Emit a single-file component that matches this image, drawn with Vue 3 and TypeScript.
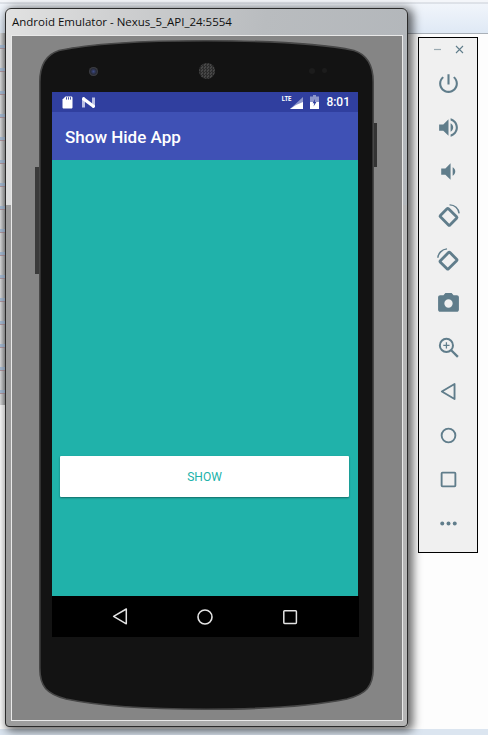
<script setup lang="ts">
// Material icon paths for the emulator's side toolbar
const toolIcons = [
  {
    name: 'power',
    d: 'M13 3h-2v10h2V3zm4.83 2.17l-1.42 1.42C17.99 7.86 19 9.81 19 12c0 3.87-3.13 7-7 7s-7-3.13-7-7c0-2.19 1.01-4.14 2.58-5.42L6.17 5.17C4.23 6.82 3 9.26 3 12c0 4.97 4.03 9 9 9s9-4.03 9-9c0-2.74-1.23-5.18-3.17-6.83z',
  },
  {
    name: 'volume-up',
    d: 'M3 9v6h4l5 5V4L7 9H3zm13.5 3c0-1.77-1.02-3.29-2.5-4.03v8.05c1.48-.73 2.5-2.25 2.5-4.02zM14 3.23v2.06c2.89.86 5 3.54 5 6.71s-2.11 5.85-5 6.71v2.06c4.01-.91 7-4.49 7-8.77s-2.99-7.86-7-8.77z',
  },
  {
    name: 'volume-down',
    d: 'M18.5 12c0-1.77-1.02-3.29-2.5-4.03v8.05c1.48-.73 2.5-2.25 2.5-4.02zM5 9v6h4l5 5V4L9 9H5z',
  },
]
</script>

<template>
  <div class="desktop">
    <div class="top-band" />
    <div class="left-strip" />
    <div class="bottom-band" />

    <div class="window">
      <div class="titlebar">Android Emulator - Nexus_5_API_24:5554</div>
      <div class="client">
        <div class="phone">
          <svg class="phone-body" width="343" height="670" viewBox="-4 0 343 670">
            <rect x="-4" y="127" width="4" height="107" fill="#3a3a3a" />
            <rect x="335" y="83" width="3" height="44" fill="#333" />
            <path
              d="M0.8 42C0.8 26 6 15 20 10.5C60 2 120 0.8 167 0.8C215 0.8 275 2 315 10.5C329 15 334.2 26 334.2 42V628C334.2 647 327 654 308 659C270 667 215 669.2 167 669.2C120 669.2 65 667 27 659C8 654 0.8 647 0.8 628Z"
              fill="#131313"
              stroke="#474747"
              stroke-width="1.6"
            />
          </svg>
          <span class="camera" />
          <span class="speaker" />
          <span class="sensor sensor-a" />
          <span class="sensor sensor-b" />

          <div class="screen">
            <div class="statusbar">
              <svg class="status-sd" width="11" height="13" viewBox="0 0 11 13">
                <path d="M3.5 0.5H9.2C10 0.5 10.5 1 10.5 1.8V11.2C10.5 12 10 12.5 9.2 12.5H1.8C1 12.5 0.5 12 0.5 11.2V3.5Z" fill="#fff" />
                <path d="M4.5 1.2V3.6M6.5 1.2V3.6M8.5 1.2V3.6" stroke="#303f9f" stroke-width="0.9" />
              </svg>
              <svg class="status-n" width="13" height="11" viewBox="0 0 13 11">
                <path d="M1.5 0.5V10.5" stroke="#b9bfe3" stroke-width="3" />
                <path d="M11.5 0.5V10.5" stroke="#b9bfe3" stroke-width="3" />
                <path d="M0.5 1L12.5 10" stroke="#fff" stroke-width="3.2" />
              </svg>
              <span class="status-lte">LTE</span>
              <svg class="status-signal" width="14" height="12" viewBox="0 0 14 12">
                <path d="M13 0V12H0Z" fill="#8d96ca" />
                <path d="M13 5V12H6L0 12L6 8Z" fill="#fff" />
              </svg>
              <svg class="status-battery" width="9" height="14" viewBox="0 0 9 14">
                <path d="M3 0H6V1.5H9V14H0V1.5H3Z" fill="#8d96ca" />
                <path d="M0 7H9V14H0Z" fill="#fff" />
                <path d="M5 4L2.6 8.3H4.2L3.6 11.5L6.4 7H4.8Z" fill="#303f9f" />
              </svg>
              <span class="status-time">8:01</span>
            </div>
            <div class="appbar">Show Hide App</div>
            <div class="content">
              <button class="show-btn" type="button">SHOW</button>
            </div>
            <div class="navbar">
              <svg width="28" height="28" viewBox="0 0 28 28">
                <path d="M20.3 6V20.8L7.6 13.4Z" fill="none" stroke="#e4e4e4" stroke-width="1.5" stroke-linejoin="round" />
              </svg>
              <svg width="28" height="28" viewBox="0 0 28 28">
                <circle cx="14" cy="14" r="7" fill="none" stroke="#e4e4e4" stroke-width="1.6" />
              </svg>
              <svg width="28" height="28" viewBox="0 0 28 28">
                <rect x="7.8" y="7.8" width="12.6" height="12.6" rx="0.8" fill="none" stroke="#e4e4e4" stroke-width="1.5" />
              </svg>
            </div>
          </div>
        </div>
      </div>
    </div>

    <div class="panel">
      <div class="panel-controls">
        <svg width="9" height="9" viewBox="0 0 9 9"><path d="M1 4.5H8" stroke="#9aa9b1" stroke-width="1.2" /></svg>
        <svg width="9" height="9" viewBox="0 0 9 9"><path d="M1 1L8 8M8 1L1 8" stroke="#607d8b" stroke-width="1.1" /></svg>
      </div>

      <div v-for="icon in toolIcons" :key="icon.name" class="tool">
        <svg width="25" height="25" viewBox="0 0 24 24"><path :d="icon.d" fill="#607d8b" /></svg>
      </div>

      <div class="tool">
        <svg width="25" height="25" viewBox="0 0 24 24" fill="none" stroke="#607d8b">
          <rect x="6.5" y="6.8" width="11" height="13" rx="1" stroke-width="2.7" transform="rotate(-45 12 13.3)" />
          <path d="M13 1.8C17.8 1.6 21.8 5.4 22.2 10" stroke-width="1.4" />
        </svg>
      </div>
      <div class="tool">
        <svg width="25" height="25" viewBox="0 0 24 24" fill="none" stroke="#607d8b">
          <rect x="6.5" y="5.2" width="11" height="13" rx="1" stroke-width="2.7" transform="rotate(45 12 11.7) translate(1 1)" />
          <path d="M1.8 10.4C2 6.2 5.6 2.2 10.6 1.8" stroke-width="1.4" />
        </svg>
      </div>
      <div class="tool">
        <svg width="25" height="25" viewBox="0 0 24 24">
          <path
            fill="#607d8b"
            fill-rule="evenodd"
            d="M9 2L7.17 4H4C2.9 4 2 4.9 2 6V18C2 19.1 2.9 20 4 20H20C21.1 20 22 19.1 22 18V6C22 4.9 21.1 4 20 4H16.83L15 2H9ZM12 8A4 4 0 1 1 12 16A4 4 0 1 1 12 8Z"
          />
        </svg>
      </div>
      <div class="tool">
        <svg width="25" height="25" viewBox="0 0 24 24" fill="none" stroke="#607d8b">
          <circle cx="10" cy="10" r="6.3" stroke-width="1.9" />
          <path d="M14.6 14.6L21 21" stroke-width="2.2" />
          <path d="M10 7V13M7 10H13" stroke-width="1.2" />
        </svg>
      </div>
      <div class="tool">
        <svg width="25" height="25" viewBox="0 0 24 24">
          <path d="M17.8 4.8V19.2L5.6 12Z" fill="none" stroke="#607d8b" stroke-width="1.8" stroke-linejoin="round" />
        </svg>
      </div>
      <div class="tool">
        <svg width="25" height="25" viewBox="0 0 24 24">
          <circle cx="12" cy="12" r="6.6" fill="none" stroke="#607d8b" stroke-width="1.8" />
        </svg>
      </div>
      <div class="tool">
        <svg width="25" height="25" viewBox="0 0 24 24">
          <rect x="5.4" y="5.4" width="13.2" height="13.2" rx="0.8" fill="none" stroke="#607d8b" stroke-width="1.8" />
        </svg>
      </div>
      <div class="tool">
        <svg width="25" height="25" viewBox="0 0 24 24" fill="#607d8b">
          <circle cx="6" cy="12" r="1.9" />
          <circle cx="12" cy="12" r="1.9" />
          <circle cx="18" cy="12" r="1.9" />
        </svg>
      </div>
    </div>
  </div>
</template>

<style scoped>
.desktop {
  position: relative;
  display: flex;
  align-items: flex-start;
  box-sizing: border-box;
  width: 488px;
  height: 735px;
  padding: 8px 0 0 5px;
  overflow: hidden;
  background: #fdfdfd;
}

.top-band {
  position: absolute;
  left: 0;
  right: 0;
  top: 0;
  height: 33px;
  background: linear-gradient(180deg, #f4f6fa 0, #f4f6fa 2px, #c9ced6 3px, #f1f5fb 4px, #dfe9f5 100%);
  border-bottom: 1px solid #a9b0b8;
}

.left-strip {
  position: absolute;
  left: 0;
  top: 33px;
  width: 5px;
  height: 372px;
  background:
    repeating-linear-gradient(180deg, transparent 0, transparent 12px, #a9bed6 12px, #a9bed6 15px, #b59aa0 15px, #b59aa0 16px, transparent 16px, transparent 23px),
    linear-gradient(90deg, #dedfe0, #a8a9aa);
}

.bottom-band {
  position: absolute;
  left: 0;
  right: 0;
  top: 729px;
  height: 6px;
  background: #dbe5f0;
}

.window {
  position: relative;
  flex: none;
  display: flex;
  flex-direction: column;
  box-sizing: border-box;
  width: 403px;
  height: 719px;
  padding: 0 6px 7px 7px;
  border-radius: 6px 6px 4px 4px;
  outline: 1px solid #2a2a2a;
  outline-offset: -1px;
  background:
    linear-gradient(100deg, #e2e2e2 0, #cfd0d1 25%, #b9bcbf 60%, #b2b6ba 100%) top / 100% 197px no-repeat,
    linear-gradient(90deg, #9c9c9c, #aaa 50%, #b5b5b5);
  box-shadow: 3px 2px 10px 2px rgba(0, 0, 0, 0.6);
}

.titlebar {
  flex: none;
  height: 28px;
  padding: 6px 0 0 0;
  box-sizing: border-box;
  font-family: "Open Sans", "Noto Sans", sans-serif;
  font-size: 11.5px;
  line-height: 16px;
  color: #101010;
  white-space: nowrap;
}

.client {
  flex: 1;
  background: #858585;
  box-shadow: 0 0 0 1px #e9e9e9;
}

.phone {
  position: relative;
  width: 335px;
  height: 670px;
  margin: 4px 0 0 27px;
  padding: 52px 0 0 13px;
  box-sizing: border-box;
}

.phone-body {
  position: absolute;
  left: -4px;
  top: 0;
}

.camera {
  position: absolute;
  left: 50px;
  top: 27px;
  width: 9px;
  height: 9px;
  border-radius: 50%;
  background: radial-gradient(circle, #3c4a86 0, #272a38 45%, #4a4a4a 80%);
}

.speaker {
  position: absolute;
  left: 160px;
  top: 23px;
  width: 16px;
  height: 16px;
  border-radius: 50%;
  background: repeating-conic-gradient(#2d2d2d 0 25%, #474747 0 50%) 0 0 / 3px 3px;
}

.sensor {
  position: absolute;
  top: 28px;
  width: 6px;
  height: 6px;
  border-radius: 50%;
  background: #1c1c1c;
}

.sensor-a {
  left: 270px;
}

.sensor-b {
  left: 283px;
  width: 5px;
  height: 5px;
}

.screen {
  position: relative;
  display: flex;
  flex-direction: column;
  width: 306px;
  height: 545px;
}

.statusbar {
  flex: none;
  display: flex;
  align-items: center;
  height: 20px;
  padding: 0 8px 0 10px;
  box-sizing: border-box;
  background: #303f9f;
}

.status-n {
  margin-left: 9px;
}

.status-lte {
  margin-left: auto;
  margin-bottom: 6px;
  font-family: Roboto, sans-serif;
  font-size: 7px;
  font-weight: 700;
  line-height: 8px;
  color: #fff;
  transform: scaleX(0.85);
}

.status-signal {
  margin-left: -2px;
  margin-top: 2px;
}

.status-battery {
  margin-left: 6px;
}

.status-time {
  margin-left: 7px;
  font-family: Roboto, sans-serif;
  font-size: 12px;
  font-weight: 500;
  color: #fff;
}

.appbar {
  flex: none;
  height: 48px;
  padding-left: 13px;
  padding-bottom: 2px;
  box-sizing: border-box;
  background: #3f51b5;
  font-family: Roboto, sans-serif;
  font-size: 17px;
  font-weight: 500;
  line-height: 50px;
  color: #fff;
}

.content {
  flex: 1;
  padding: 296px 9px 0 8px;
  background: #20b2aa;
}

.show-btn {
  display: block;
  width: 100%;
  height: 41px;
  padding: 0;
  border: 0;
  border-radius: 1px;
  background: #fff;
  box-shadow: 0 1px 2px rgba(0, 0, 0, 0.4);
  font-family: Roboto, sans-serif;
  font-size: 12px;
  color: #20b2aa;
}

.navbar {
  flex: none;
  display: flex;
  align-items: center;
  gap: 57px;
  height: 41px;
  margin-right: -1px;
  padding-left: 54px;
  background: #000;
}

.panel {
  position: relative;
  flex: none;
  box-sizing: border-box;
  width: 60px;
  height: 516px;
  margin: 29px 0 0 10px;
  border: 1px solid #000;
  background: #f0f0f0;
}

.panel-controls {
  display: flex;
  justify-content: center;
  align-items: center;
  gap: 13px;
  height: 23px;
}

.tool {
  display: flex;
  justify-content: center;
  align-items: center;
  height: 44px;
}
</style>

<style>
html,
body {
  overflow: hidden;
  background: #fff;
}
</style>
